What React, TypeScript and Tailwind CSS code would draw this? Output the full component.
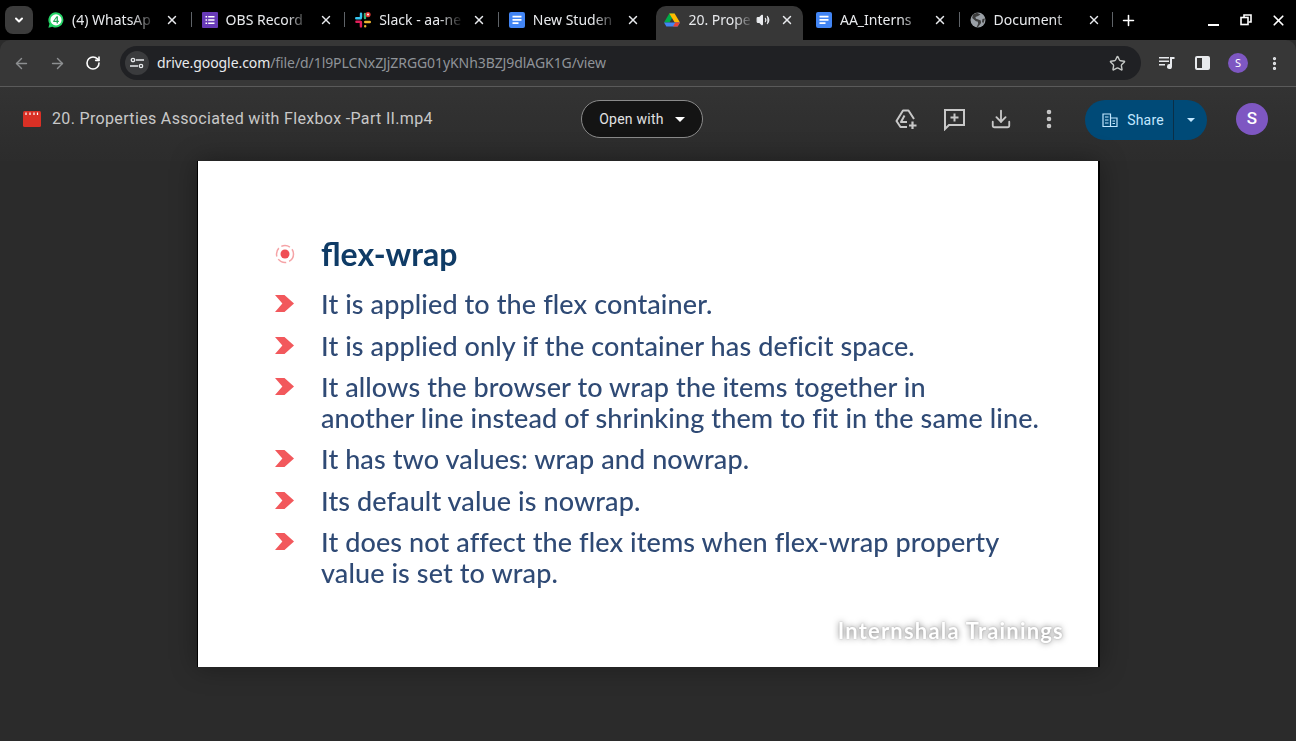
import { ArrowLeft, ArrowRight, Download, MoreVertical, Plus, RotateCw, Star, Volume2, X } from "lucide-react";

type TabIcon = "whatsapp" | "forms" | "slack" | "docs" | "drive" | "globe";

const tabs: { title: string; icon: TabIcon; active?: boolean; sound?: boolean; sep?: boolean }[] = [
  { title: "(4) WhatsAp", icon: "whatsapp", sep: true },
  { title: "OBS Record", icon: "forms", sep: true },
  { title: "Slack - aa-ne", icon: "slack", sep: true },
  { title: "New Studen", icon: "docs" },
  { title: "20. Prope", icon: "drive", active: true, sound: true },
  { title: "AA_Interns", icon: "docs", sep: true },
  { title: "Document", icon: "globe", sep: true },
];

const bullets = [
  ["It is applied to the flex container."],
  ["It is applied only if the container has deficit space."],
  ["It allows the browser to wrap the items together in", "another line instead of shrinking them to fit in the same line."],
  ["It has two values: wrap and nowrap."],
  ["Its default value is nowrap."],
  ["It does not affect the flex items when flex-wrap property", "value is set to wrap."],
];

function FavIcon({ icon }: { icon: TabIcon }) {
  if (icon === "whatsapp") {
    return (
      <svg viewBox="0 0 16 16" className="h-4 w-4 shrink-0">
        <path d="M8 .3a7.6 7.6 0 0 0-6.5 11.5L.4 15.7l4-1A7.6 7.6 0 1 0 8 .3z" fill="#25d366" />
        <circle cx="8" cy="7.9" r="5.6" fill="#fff" />
        <path d="M8.6 4.2h1.3v4.6h1v1.1h-1v1.7H8.6V9.9H5.2V8.9zM8.6 6 6.5 8.8h2.1z" fill="#1fa855" />
      </svg>
    );
  }
  if (icon === "forms") {
    return (
      <svg viewBox="0 0 16 16" className="h-4 w-4 shrink-0">
        <rect width="16" height="16" rx="1" fill="#673ab7" />
        <path d="M3.5 4h1.6v1.5H3.5zM6.2 4h6.3v1.5H6.2zM3.5 7.2h1.6v1.5H3.5zM6.2 7.2h6.3v1.5H6.2zM3.5 10.4h1.6v1.5H3.5zM6.2 10.4h6.3v1.5H6.2z" fill="#fff" />
      </svg>
    );
  }
  if (icon === "slack") {
    return (
      <svg viewBox="0 0 16 16" className="h-4 w-4 shrink-0">
        <path d="M1.2 6.200h4.600M6 1.600v3.600" stroke="#36c5f0" strokeWidth="2.400" strokeLinecap="round" />
        <path d="M1.400 9.800h3.800M5.900 10v4.400" stroke="#e01e5a" strokeWidth="2.400" strokeLinecap="round" />
        <path d="M10 2v4.100" stroke="#2eb67d" strokeWidth="2.400" strokeLinecap="round" />
        <path d="M10.200 10h4.600M10.200 14.200v-.1" stroke="#ecb22e" strokeWidth="2.400" strokeLinecap="round" />
        <circle cx="13" cy="2.600" r="2.600" fill="#e53935" />
        <circle cx="13" cy="2.600" r="1" fill="#fff" />
      </svg>
    );
  }
  if (icon === "docs") {
    return (
      <svg viewBox="0 0 16 16" className="h-4 w-4 shrink-0">
        <rect width="16" height="16" rx="2" fill="#4285f4" />
        <path d="M3.500 3.800h9v1.800h-9zM3.500 7h9v1.800h-9zM3.500 10.200h6v1.800h-6z" fill="#fff" />
      </svg>
    );
  }
  if (icon === "drive") {
    return (
      <svg viewBox="0 0 16 14" className="h-[14px] w-4 shrink-0">
        <path d="M5.300.6h5.300l-5.100 8.900H0z" fill="#00ac47" />
        <path d="M5.300.6h5.300L16 9.500h-5.300z" fill="#ffba00" />
        <path d="M0 9.500h16l-2.400 4H2.400z" fill="#4285f4" />
        <path d="M16 9.500l-2.400 4H9l2.300-4z" fill="#ea4335" />
      </svg>
    );
  }
  return (
    <svg viewBox="0 0 16 16" className="h-4 w-4 shrink-0">
      <circle cx="8" cy="8" r="7.500" fill="#9aa0a6" />
      <path d="M7 .7 3 2.400 2.200 6 6 9.200l1.700.2.500 2L6.800 15c.4.1.8.1 1.200.1l3-4-.2-2.600-3.200-1.200-1.700-.5L5.400 4.900 8 4l2.500-1.500zM15 6.500l-2.500.5-.5 2.500 1.200 2z" fill="#3c3c3c" />
    </svg>
  );
}

function Tab({ title, icon, active, sound, sep }: (typeof tabs)[number]) {
  return (
    <div className="relative flex h-[34px] w-[153.6px] shrink-0 items-start pl-[10px]">
      {active && (
        <div className="absolute top-0 right-[3px] bottom-0 left-[4px] rounded-t-[10px] bg-[#373737]" />
      )}
      <div className="relative flex h-[28px] w-full items-center">
        <div className={`flex w-4 shrink-0 justify-center ${active ? "ml-[2px]" : ""}`}>
          <FavIcon icon={icon} />
        </div>
        <div className={`ml-2 overflow-hidden text-[14px] leading-5 whitespace-nowrap text-[#e8eaed] [mask-image:linear-gradient(to_right,black_72%,transparent)] ${sound ? "w-[65px]" : "w-[84px]"}`}>
          {title}
        </div>
        {sound && <Volume2 className="ml-[3px] h-[14px] w-[14px] shrink-0 fill-[#e8eaed] text-[#e8eaed]" strokeWidth={2} />}
        <X className={`h-[14px] w-[14px] shrink-0 text-[#e8eaed] ${sound ? "ml-[10px]" : "ml-[9px]"}`} strokeWidth={2.5} />
      </div>
      {sep && <div className="absolute top-[6px] right-[0px] h-[15px] w-px bg-[#5f6368]" />}
    </div>
  );
}

function TabStrip() {
  return (
    <div className="flex h-10 items-stretch bg-black font-['Noto_Sans',sans-serif]">
      <div className="flex w-[38px] shrink-0 items-center pl-[5px]">
        <div className="flex h-[28px] w-[28px] items-center justify-center rounded-[8px] bg-[#3c3c3c]">
          <svg viewBox="0 0 12 12" className="h-3 w-3" fill="none" stroke="#fff" strokeWidth="2" strokeLinecap="round" strokeLinejoin="round">
            <path d="M3 4.500 6 7.500l3-3" />
          </svg>
        </div>
      </div>
      <div className="flex pt-[6px]">
        {tabs.map((t) => (
          <Tab key={t.title} {...t} />
        ))}
      </div>
      <div className="flex flex-1 items-center pl-[7px]">
        <Plus className="h-[17px] w-[17px] text-white" strokeWidth={2.2} />
        <div className="ml-auto flex items-center pr-[9px]">
          <div className="mt-[9px] h-[2px] w-[11px] bg-white" />
          <svg viewBox="0 0 12 12" className="ml-[21px] h-3 w-3" fill="none" stroke="#fff" strokeWidth="1.600">
            <rect x="1" y="3.500" width="7" height="7" fill="#000" />
            <path d="M4 3V1h7v7H8.500" />
          </svg>
          <X className="ml-[18px] h-[17px] w-[17px] text-white" strokeWidth={2.4} />
        </div>
      </div>
    </div>
  );
}

function Toolbar() {
  return (
    <div className="flex h-[46px] items-center rounded-t-[10px] bg-[#373737] pt-[6px] pr-[13px] pb-[6px] font-['Noto_Sans',sans-serif]">
      <div className="flex w-[120px] shrink-0 items-center pl-[13px]">
        <ArrowLeft className="h-[17px] w-[17px] text-[#8d8f91]" strokeWidth={2} />
        <ArrowRight className="ml-[19px] h-[17px] w-[17px] text-[#8d8f91]" strokeWidth={2} />
        <RotateCw className="ml-[19px] h-4 w-4 text-white" strokeWidth={2.4} />
      </div>
      <div className="flex h-[34px] flex-1 items-center rounded-full bg-[#202124] pr-[15px] pl-[5px]">
        <div className="flex h-[24px] w-[24px] items-center justify-center rounded-full bg-[#3a3b3d]">
          <svg viewBox="0 0 14 12" className="h-3 w-[14px]" fill="none" stroke="#e8eaed" strokeWidth="1.300">
            <path d="M6 3h8M0 9h8" />
            <circle cx="3" cy="3" r="1.700" />
            <circle cx="11" cy="9" r="1.700" />
          </svg>
        </div>
        <div className="ml-[8px] text-[14px] leading-5 tracking-[-0.08px] whitespace-nowrap text-[#e8eaed]">
          drive.google.com<span className="text-[#8f9398]">/file/d/1l9PLCNxZJjZRGG01yKNh3BZJ9dlAGK1G/view</span>
        </div>
        <Star className="ml-auto h-[17px] w-[17px] text-[#c4c7c5]" strokeWidth={2} />
      </div>
      <div className="ml-[18px] flex items-center">
        <svg viewBox="0 0 16 14" className="h-[14px] w-4" fill="#e8eaed">
          <path d="M0 1h10v1.500H0zM0 4.500h10V6H0zM0 8h6v1.500H0z" />
          <path d="M11 1h4.500v2H13v7.500a2.500 2.500 0 1 1-2-2.400z" />
        </svg>
        <div className="ml-[20px] flex h-[14px] w-[15px] overflow-hidden rounded-[2px] border-2 border-[#e8eaed]">
          <div className="flex-1" />
          <div className="w-[6px] bg-[#e8eaed]" />
        </div>
        <div className="ml-[18px] flex h-5 w-5 items-center justify-center rounded-full bg-[#7e57c2] text-[11px] text-white">S</div>
        <MoreVertical className="ml-[18px] h-[17px] w-[17px] text-[#e8eaed]" strokeWidth={2.6} />
      </div>
    </div>
  );
}

function DriveHeader() {
  return (
    <div className="flex h-[75px] items-start border-t border-[#5a5a5a] pt-[13px] font-['Roboto',sans-serif]">
      <div className="flex h-[37px] w-[581px] shrink-0 items-center pl-[23px]">
        <svg viewBox="0 0 18 16" className="h-4 w-[18px] shrink-0">
          <rect width="18" height="16" rx="1.500" fill="#d93025" />
          <path d="M3 1.500v2.500M7 1.500v2.500M11 1.500v2.500M14.500 1.500v2.500" stroke="#fff" strokeWidth="1.200" />
        </svg>
        <div className="ml-[11px] text-[16px] tracking-[0.34px] whitespace-nowrap text-[#c8c8c8]">
          20. Properties Associated with Flexbox -Part II.mp4
        </div>
      </div>
      <button className="flex h-[38px] w-[122px] shrink-0 items-center justify-center gap-[11px] rounded-full border border-[#8a8a8a] bg-[#141414] text-[14px] tracking-[0.25px] text-[#e3e3e3]">
        Open with
        <span className="h-0 w-0 border-x-[5px] border-t-[5px] border-x-transparent border-t-white" />
      </button>
      <div className="ml-auto flex h-[40px] items-center pr-[28px]">
        <svg viewBox="0 0 24 24" className="mb-[2px] h-6 w-6" fill="none" stroke="#c8c8c8" strokeWidth="2" strokeLinejoin="round">
          <path d="M13 20H6.500L2.500 14 9 3.500h5.500L20 12" />
          <path d="M10.500 8.500 7 15h6" />
          <path d="M18.500 14.500v7.500M15 18.500h7.500" strokeWidth="2.200" />
        </svg>
        <svg viewBox="0 0 24 24" className="mb-[2px] ml-[24px] h-6 w-6" fill="none" stroke="#c8c8c8" strokeWidth="2">
          <path d="M3 3h19v15H7l-4 4zM12.500 6.500v8M8.500 10.500h8" />
        </svg>
        <Download className="mb-[2px] ml-[24px] h-[22px] w-[22px] text-[#c8c8c8]" strokeWidth={2} />
        <MoreVertical className="mb-[2px] ml-[25px] h-6 w-6 text-[#c8c8c8]" strokeWidth={2.6} />
        <div className="ml-[24px] flex h-10 w-[122px] overflow-hidden rounded-full bg-[#004a77] text-[14px] tracking-[0.2px] text-[#c2e7ff]">
          <div className="flex flex-1 items-center justify-center gap-[9px] border-r border-[#0b2f47] pl-[8px]">
            <svg viewBox="0 0 16 16" className="h-4 w-4" fill="none" stroke="#c2e7ff" strokeWidth="1.200">
              <path d="M1 2h7.500v12.500H1zM8.500 6H15v8.500H8.500M3 5h3.500M3 8h3.500M3 11h3.500M10.500 9H13M10.500 11.500H13" />
            </svg>
            Share
          </div>
          <div className="flex w-[33px] items-center justify-center">
            <span className="h-0 w-0 border-x-[4px] border-t-[4px] border-x-transparent border-t-[#c2e7ff]" />
          </div>
        </div>
        <div className="mb-[2px] ml-[29px] flex h-8 w-8 items-center justify-center rounded-full bg-[#7e57c2] text-[17px] font-medium text-white">S</div>
      </div>
    </div>
  );
}

function Chevron() {
  return (
    <svg viewBox="0 0 18 16" className="h-[17px] w-[19px] shrink-0">
      <path d="M0 0h9l9 8-9 8H0l7-8z" fill="#f2585c" />
    </svg>
  );
}

function Slide() {
  return (
    <div className="ml-[197px] flex h-[506px] w-[903px] flex-col border-r-2 border-l border-black bg-white pl-[77px] font-['Lato',sans-serif] text-[#2f4a75] shadow-[0_0_24px_rgba(0,0,0,0.35)]">
      <div className="flex flex-col blur-[0.5px]">
        <div className="mt-[73px] flex h-[40px] items-center">
          <svg viewBox="0 0 20 20" className="h-5 w-5 shrink-0">
            <circle cx="10" cy="10" r="8.500" fill="none" stroke="#f5a3a6" strokeWidth="1.500" strokeDasharray="9 3" />
            <circle cx="10" cy="10" r="4.500" fill="#ef4f55" />
          </svg>
          <div className="ml-[26px] text-[32px] leading-10 font-bold text-[#0f3b66]">flex-wrap</div>
        </div>
        <div className="mt-[15px] flex flex-col gap-[11px]">
          {bullets.map((lines) => (
            <div key={lines[0]} className="flex">
              <div className="mt-[6px] w-[46px] shrink-0">
                <Chevron />
              </div>
              <div className="text-[27px] leading-[30.5px] font-medium tracking-[0.1px] whitespace-nowrap">
                {lines.map((l) => (
                  <div key={l}>{l}</div>
                ))}
              </div>
            </div>
          ))}
        </div>
      </div>
      <div className="mt-auto mr-[34px] mb-[22px] self-end text-[22px] leading-7 font-bold tracking-[1.2px] text-white blur-[0.5px] [text-shadow:0_0_6px_rgba(0,0,0,0.5),0_0_2px_rgba(0,0,0,0.25)]">
        Internshala Trainings
      </div>
    </div>
  );
}

export default function App() {
  return (
    <div className="flex h-[741px] w-[1296px] flex-col overflow-hidden bg-[#2b2b2b]">
      <TabStrip />
      <Toolbar />
      <div className="bg-[linear-gradient(#333333,#2c2c2c)]">
        <DriveHeader />
      </div>
      <Slide />
    </div>
  );
}
